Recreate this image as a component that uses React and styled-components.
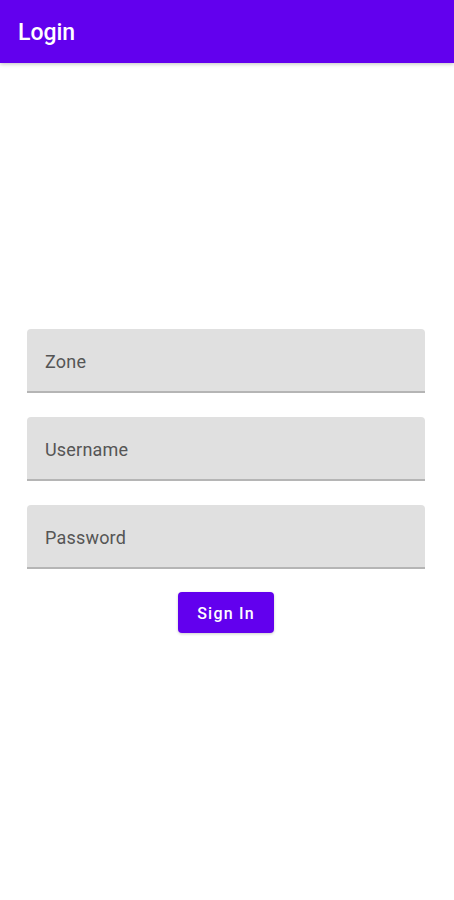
import React from "react";
import styled, { createGlobalStyle } from "styled-components";

const Global = createGlobalStyle`
  body {
    margin: 0;
    background: #ffffff;
    font-family: Roboto, "Liberation Sans", sans-serif;
  }
`;

const Page = styled.div`
  width: 454px;
  height: 900px;
  display: flex;
  flex-direction: column;
  background: #ffffff;
`;

const Bar = styled.header`
  height: 63px;
  flex-shrink: 0;
  box-sizing: border-box;
  display: flex;
  align-items: center;
  padding: 2px 18px 0;
  background: #6200ee;
  box-shadow: 0 1px 4px rgba(0, 0, 0, 0.25);
`;

const Title = styled.h1`
  margin: 0;
  color: #ffffff;
  font-size: 23px;
  font-weight: 500;
`;

const Form = styled.div`
  display: flex;
  flex-direction: column;
  align-items: center;
  padding: 266px 29px 0 27px;
`;

const Field = styled.div`
  width: 100%;
  height: 64px;
  box-sizing: border-box;
  display: flex;
  align-items: center;
  padding: 3px 18px 0;
  margin-bottom: ${(p) => (p.last ? "23px" : "24px")};
  background: #e0e0e0;
  border-radius: 4px 4px 0 0;
  border-bottom: 2px solid #b5b5b5;
  color: #555555;
  font-size: 18px;
  letter-spacing: 0.2px;
`;

const Button = styled.button`
  width: 96px;
  height: 41px;
  border: none;
  border-radius: 4px;
  background: #6200ee;
  color: #ffffff;
  font-family: Roboto, "Liberation Sans", sans-serif;
  font-size: 16px;
  font-weight: 500;
  letter-spacing: 1.2px;
  padding-top: 3px;
  box-shadow: 0 1px 3px rgba(0, 0, 0, 0.2);
  cursor: pointer;
`;

export default function App() {
  return (
    <Page>
      <Global />
      <Bar>
        <Title>Login</Title>
      </Bar>
      <Form>
        <Field>Zone</Field>
        <Field>Username</Field>
        <Field last>Password</Field>
        <Button>Sign In</Button>
      </Form>
    </Page>
  );
}
